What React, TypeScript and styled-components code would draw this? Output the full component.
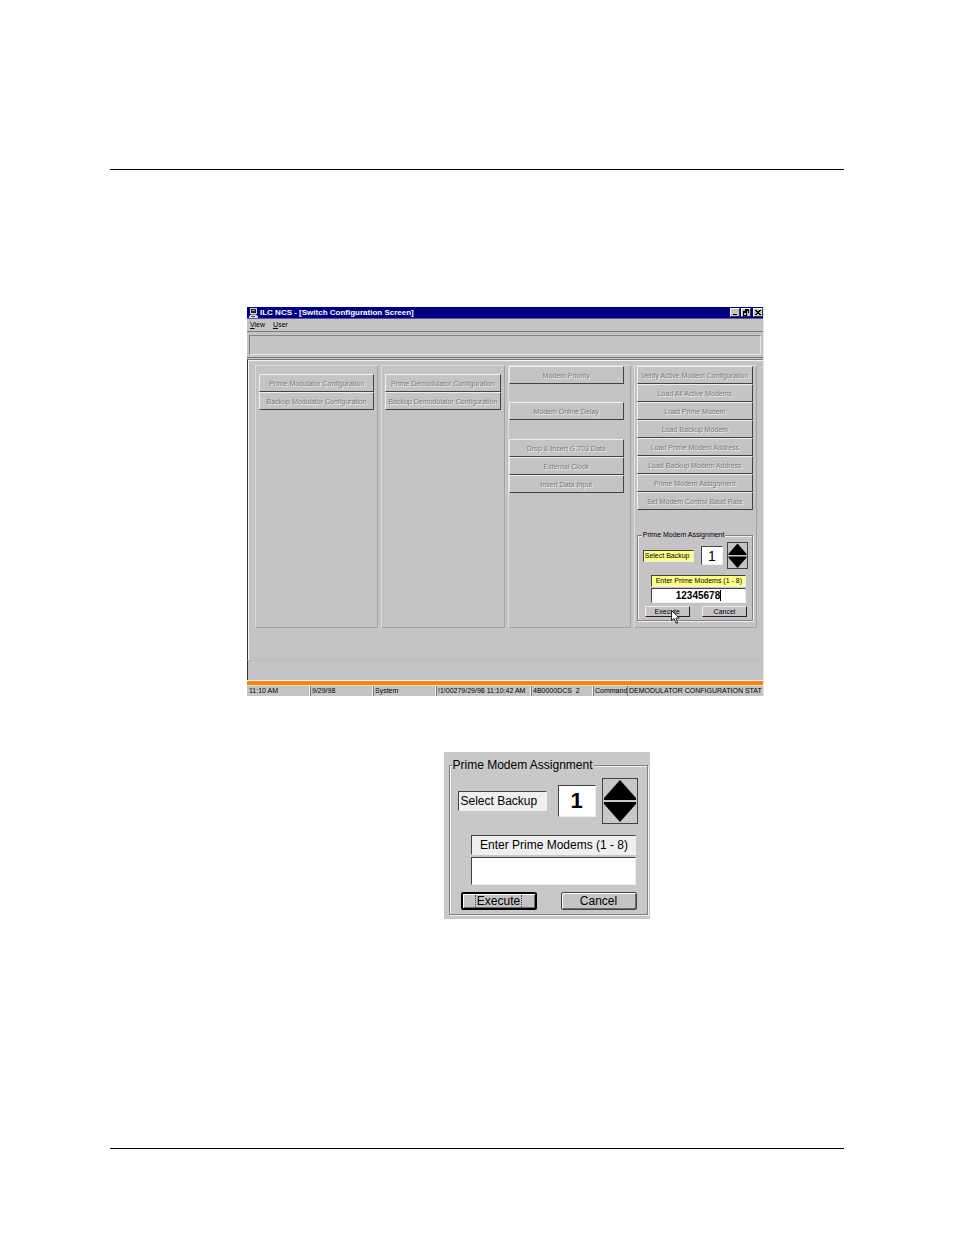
import React from "react";
import styled, { createGlobalStyle, css } from "styled-components";

const GRAY = "#c6c3c6";

const GlobalStyle = createGlobalStyle`
  *, *::before, *::after { box-sizing: border-box; }
  body { margin: 0; background: #fff; color: #000; font-family: "Liberation Sans", Arial, sans-serif; }
  button, input { font-family: inherit; color: inherit; margin: 0; padding: 0; border-radius: 0; }
`;

const Page = styled.div`
  min-height: 100vh;
  display: flex;
  flex-direction: column;
  padding: 169px 110px 86px;
`;

const Rule = styled.hr`
  width: 100%;
  height: 1px;
  margin: 0;
  border: 0;
  background: #000;
`;

const Figures = styled.main`
  flex: 1;
  display: flex;
  flex-direction: column;
  gap: 56px;
  padding: 137px 80px 40px 137px;
`;

const AppWindow = styled.section`
  background: ${GRAY};
  border-right: 1px solid #e7e3e7;
  font-size: 7px;
  line-height: 11px;
`;

const TitleBar = styled.header`
  display: flex;
  align-items: center;
  gap: 2px;
  height: 12px;
  padding: 0 0 0 2px;
  background: #000084;
  border-bottom: 1px solid #5a5a9c;
  color: #fff;
`;

const Title = styled.h1`
  flex: 1;
  margin: 0;
  font-size: 8px;
  line-height: 11px;
  font-weight: bold;
  white-space: nowrap;
`;

const WindowButtons = styled.div`
  display: flex;
`;

const WindowButton = styled.button<{ $apart?: boolean }>`
  display: block;
  width: 10px;
  height: 9px;
  margin-left: ${(p) => (p.$apart ? 2 : 1)}px;
  border: 1px solid;
  border-color: #fff #333 #333 #fff;
  background: ${GRAY};

  svg { display: block; }
`;

const MenuBar = styled.nav`
  display: flex;
  gap: 8px;
  height: 12px;
  padding: 0 3px;
`;

const MenuLink = styled.a`
  color: #000;
  text-decoration: none;
`;

const ToolStrip = styled.div`
  padding: 3px 2px 2px;
  border-top: 1px solid #7b7b7b;
  border-bottom: 1px solid #7b7b7b;
`;

const ToolWell = styled.div`
  height: 20px;
  border: 1px solid;
  border-color: #848284 #e7e7e7 #e7e7e7 #848284;
`;

const Client = styled.div`
  margin-top: 1px;
  padding: 5px 6px 32px 7px;
  border-top: 1px solid #7b7b7b;
  border-left: 1px solid #333;
  box-shadow: inset 1px 1px 0 #f4f4f4;
`;

const Columns = styled.div`
  display: grid;
  grid-template-columns: repeat(4, minmax(0, 1fr));
  gap: 3px;
  min-height: 263px;
`;

const Column = styled.div<{ $pad?: string }>`
  display: flex;
  flex-direction: column;
  padding: ${(p) => p.$pad ?? "0 3px"};
  border: 1px solid;
  border-color: #dedbde #a5a2a5 #a5a2a5 #dedbde;
`;

const ButtonStack = styled.div<{ $after?: number }>`
  display: flex;
  flex-direction: column;
  margin-bottom: ${(p) => p.$after ?? 0}px;
`;

const CommandButton = styled.button`
  height: 18px;
  border: 1px solid;
  border-color: #efefef #424242 #424242 #efefef;
  background: ${GRAY};
  font-size: 7px;
  line-height: 11px;
  white-space: nowrap;

  &:disabled {
    color: #7b797b;
    text-shadow: 1px 1px 0 #efefef;
  }
`;

const Footer = styled.div`
  height: 20px;
  border-top: 1px solid #bdbabd;
  border-left: 1px solid #333;
`;

const Alarm = styled.div`
  height: 6px;
  border-top: 1px solid #fff;
  border-bottom: 1px solid #e7e3e7;
  background: #ff8200;
`;

const StatusBar = styled.footer`
  display: grid;
  grid-template-columns: 63fr 63fr 63fr 95fr 62fr 34fr 136fr;
  height: 10px;
`;

const StatusCell = styled.span`
  min-width: 0;
  padding-left: 2px;
  white-space: pre;
  line-height: 10px;

  & + & {
    padding-left: 1px;
    border-left: 1px solid #7b7b7b;
    box-shadow: -1px 0 0 #efefef;
  }

  &:last-child { box-shadow: none; }
`;

type Size = "small" | "large";

const METRICS: Record<Size, { font: number; legend: number; digit: number }> = {
  small: { font: 7, legend: 10, digit: 14 },
  large: { font: 12, legend: 20, digit: 22 },
};

const sized = (small: ReturnType<typeof css>, large: ReturnType<typeof css>) =>
  css<{ $size: Size }>`
    ${(p) => (p.$size === "small" ? small : large)}
  `;

const Group = styled.fieldset<{ $size: Size }>`
  position: relative;
  min-width: 0;
  margin: 0;
  border: 1px solid #848284;
  box-shadow: inset 1px 1px 0 #efefef, 1px 1px 0 #efefef;
  font-size: ${(p) => METRICS[p.$size].font}px;
  line-height: ${(p) => METRICS[p.$size].legend}px;
  ${sized(
    css`padding: 2px 4px 3px 5px;`,
    css`padding: 3px 9px 4px 8px;`
  )}
`;

const Legend = styled.legend<{ $size: Size }>`
  padding: 0 1px;
  margin-left: ${(p) => (p.$size === "small" ? -1 : -6)}px;
  background: ${(p) => (p.$size === "small" ? GRAY : "#c8c8c8")};
  white-space: nowrap;
`;

const BackupRow = styled.div`
  display: flex;
  align-items: center;
`;

const sunken = css`
  border: 1px solid;
  border-color: #424242 #efefef #efefef #424242;
`;

const FieldLabel = styled.label<{ $size: Size; $wide?: boolean }>`
  ${sunken}
  display: block;
  background: ${(p) => (p.$size === "small" ? "#ffff84" : "#efefef")};
  white-space: nowrap;
  text-align: ${(p) => (p.$wide ? "center" : "left")};
  ${sized(
    css`height: 12px; padding-left: 1px;`,
    css`height: 20px; line-height: 18px; padding-left: 2px;`
  )}
  ${(p) => !p.$wide && (p.$size === "small" ? css`width: 51px;` : css`width: 89px;`)}
`;

const NumberBox = styled.input<{ $size: Size }>`
  ${sunken}
  background: #fff;
  text-align: center;
  font-size: ${(p) => METRICS[p.$size].digit}px;
  ${sized(
    css`width: 22px; height: 19px; margin: 0 4px 0 auto;`,
    css`width: 38px; height: 32px; margin: 0 6px 0 auto; font-weight: bold;`
  )}
`;

const Spinner = styled.div<{ $size: Size }>`
  display: flex;
  flex-direction: column;
  border: 1px solid #424242;
  ${sized(
    css`width: 21px; height: 27px;`,
    css`width: 36px; height: 46px;`
  )}
`;

const SpinButton = styled.button`
  flex: 1;
  min-height: 0;
  border: 0;
  background: transparent;

  svg { display: block; width: 100%; height: 100%; }
`;

const EntryBlock = styled.div<{ $size: Size }>`
  display: flex;
  flex-direction: column;
  ${sized(
    css`gap: 1px; margin: 6px 2px 0 8px;`,
    css`gap: 2px; margin: 11px 2px 0 13px;`
  )}
`;

const EntryWrap = styled.div`
  position: relative;
  display: flex;
`;

const Entry = styled.input<{ $size: Size }>`
  ${sunken}
  flex: 1;
  min-width: 0;
  background: #fff;
  font-weight: bold;
  ${sized(
    css`height: 15px; padding-left: 24px; font-size: 10px;`,
    css`height: 28px; padding-left: 6px; font-size: 16px;`
  )}
`;

const Caret = styled.span`
  position: absolute;
  left: 69px;
  top: 2px;
  width: 1px;
  height: 11px;
  background: #000;
`;

const Actions = styled.div<{ $size: Size }>`
  display: flex;
  justify-content: space-between;
  ${sized(
    css`margin: 3px 1px 0 2px;`,
    css`margin: 7px 1px 0 3px;`
  )}
`;

const ActionButton = styled.button<{ $size: Size; $focused?: boolean }>`
  position: relative;
  display: flex;
  align-items: center;
  justify-content: center;
  background: ${GRAY};
  border: 1px solid;
  border-color: #efefef #212121 #212121 #efefef;
  ${sized(
    css`width: 45px; height: 11px; font-size: 7px; line-height: 9px;`,
    css`
      width: 76px; height: 18px; font-size: 12px; line-height: 16px;
      border-color: #424242;
      border-radius: 2px;
      box-shadow: inset 1px 1px 0 #fff, inset -1px -1px 0 #6b6b6b;
    `
  )}
  ${(p) => p.$focused && css`
    border: 2px solid #000;

    span { height: 12px; line-height: 12px; padding: 0 1px; border: dotted #424242; border-width: 0 1px; }
  `}
`;

const Pointer = styled.svg`
  position: absolute;
  left: 25px;
  top: 3px;
  z-index: 1;
`;

const DialogFigure = styled.section`
  align-self: center;
  width: 206px;
  margin-left: 82px;
  padding: 3px 2px 4px 5px;
  background: #c8c8c8;
`;

const TitleIcon = () => (
  <svg width="9" height="10" viewBox="0 0 9 10" aria-hidden="true" shapeRendering="crispEdges">
    <path d="M1 0h7v6H1z" fill="#d8d8d8" />
    <path d="M2 1h5v4H2z" fill="#18184a" />
    <path d="M3 2h3v1H3z" fill="#8cb5b5" />
    <path d="M2 6h5v1H2z" fill="#888" />
    <path d="M1 7h7v1H1zM0 8h9v2H0z" fill="#d8d8d8" />
    <path d="M2 8h4v1H2z" fill="#444" />
  </svg>
);

const glyphs: Record<string, string> = {
  Minimize: "M2 5h4v1H2z",
  Restore: "M3 0h4v4H6V2H3zM1 2h4v5H1zM2 4v2h2V4z",
  Close: "M1 1h2v1h2V1h2v1H6v1H5v1h1v1h1v1H5V5H3v1H1V5h1V4h1V3H2V2H1z",
};

const PrimeModemGroup = ({ size, value }: { size: Size; value: string }) => {
  const small = size === "small";
  return (
    <Group $size={size}>
      <Legend $size={size}>Prime Modem Assignment</Legend>
      <BackupRow>
        <FieldLabel $size={size} htmlFor={`backup-${size}`}>Select Backup</FieldLabel>
        <NumberBox $size={size} id={`backup-${size}`} defaultValue="1" />
        <Spinner $size={size}>
          <SpinButton type="button" aria-label="Increase">
            <svg viewBox="0 0 34 22" preserveAspectRatio="none"><path d="M17 1L33 19V21H1V19z" /></svg>
          </SpinButton>
          <SpinButton type="button" aria-label="Decrease">
            <svg viewBox="0 0 34 22" preserveAspectRatio="none"><path d="M17 21L33 3V1H1V3z" /></svg>
          </SpinButton>
        </Spinner>
      </BackupRow>
      <EntryBlock $size={size}>
        <FieldLabel $size={size} $wide htmlFor={`modems-${size}`}>Enter Prime Modems (1 - 8)</FieldLabel>
        <EntryWrap>
          <Entry $size={size} id={`modems-${size}`} defaultValue={value} />
          {small && <Caret />}
        </EntryWrap>
      </EntryBlock>
      <Actions $size={size}>
        <ActionButton type="button" $size={size} $focused={!small}>
          <span>Execute</span>
          {small && (
            <Pointer width="9" height="14" viewBox="0 0 9 14" aria-hidden="true">
              <path d="M.5.5V10.5L3 8.3L5 13H6.700L5 8H8.200z" fill="#fff" stroke="#000" strokeWidth=".8" />
            </Pointer>
          )}
        </ActionButton>
        <ActionButton type="button" $size={size}><span>Cancel</span></ActionButton>
      </Actions>
    </Group>
  );
};

const Commands = ({ names, after }: { names: string[]; after?: number }) => (
  <ButtonStack $after={after}>
    {names.map((name) => (
      <CommandButton key={name} type="button" disabled>{name}</CommandButton>
    ))}
  </ButtonStack>
);

const STATUS = [
  "11:10 AM",
  "9/29/98",
  "System",
  "!1!00279/29/98 11:10:42 AM",
  "4B0000DCS  2",
  "Command",
  "DEMODULATOR CONFIGURATION STAT",
];

export default function App() {
  return (
    <>
      <GlobalStyle />
      <Page>
        <Rule />
        <Figures>
          <AppWindow>
            <TitleBar>
              <TitleIcon />
              <Title>ILC NCS - [Switch Configuration Screen]</Title>
              <WindowButtons>
                {Object.entries(glyphs).map(([name, d]) => (
                  <WindowButton key={name} type="button" aria-label={name} $apart={name === "Close"}>
                    <svg width="8" height="7" viewBox="0 0 8 7" shapeRendering="crispEdges">
                      <path d={d} fillRule="evenodd" />
                    </svg>
                  </WindowButton>
                ))}
              </WindowButtons>
            </TitleBar>
            <MenuBar>
              <MenuLink href="#view"><u>V</u>iew</MenuLink>
              <MenuLink href="#user"><u>U</u>ser</MenuLink>
            </MenuBar>
            <ToolStrip><ToolWell /></ToolStrip>
            <Client>
              <Columns>
                <Column $pad="8px 3px 0">
                  <Commands names={["Prime Modulator Configuration", "Backup Modulator Configuration"]} />
                </Column>
                <Column $pad="8px 3px 0">
                  <Commands names={["Prime Demodulator Configuration", "Backup Demodulator Configuration"]} />
                </Column>
                <Column $pad="0 6px 0 0">
                  <Commands names={["Modem Priority"]} after={18} />
                  <Commands names={["Modem Online Delay"]} after={19} />
                  <Commands names={["Drop & Insert G.703 Data", "External Clock", "Insert Data Input"]} />
                </Column>
                <Column $pad="0 3px 0 2px">
                  <Commands
                    after={20}
                    names={[
                      "Verify Active Modem Configuration",
                      "Load All Active Modems",
                      "Load Prime Modem",
                      "Load Backup Modem",
                      "Load Prime Modem Address",
                      "Load Backup Modem Address",
                      "Prime Modem Assignment",
                      "Set Modem Control Baud Rate",
                    ]}
                  />
                  <PrimeModemGroup size="small" value="12345678" />
                </Column>
              </Columns>
            </Client>
            <Footer />
            <Alarm />
            <StatusBar>
              {STATUS.map((text) => <StatusCell key={text}>{text}</StatusCell>)}
            </StatusBar>
          </AppWindow>
          <DialogFigure>
            <PrimeModemGroup size="large" value="" />
          </DialogFigure>
        </Figures>
        <Rule />
      </Page>
    </>
  );
}
